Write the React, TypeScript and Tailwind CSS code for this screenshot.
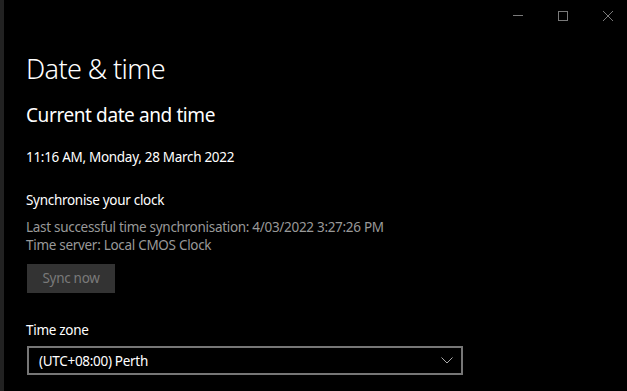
import React from 'react';

function TitleBarControls() {
  return (
    <div className="flex h-[31px] items-center justify-end gap-[35px] pr-[14px]">
      <svg width="10" height="10" viewBox="0 0 10 10" className="text-[#7a7a7a]">
        <path d="M0 4.5H10" stroke="currentColor" strokeWidth="1" />
      </svg>
      <svg width="10" height="10" viewBox="0 0 10 10" className="text-[#7a7a7a]">
        <rect x="0.5" y="0.5" width="9" height="9" fill="none" stroke="currentColor" strokeWidth="1" />
      </svg>
      <svg width="10" height="10" viewBox="0 0 10 10" className="text-[#7a7a7a]">
        <path d="M0 0L10 10M10 0L0 10" stroke="currentColor" strokeWidth="1" />
      </svg>
    </div>
  );
}

export default function App() {
  return (
    <div
      className="flex h-[391px] w-[627px] overflow-hidden bg-black text-[13.5px] tracking-[-0.3px] text-white"
      style={{ fontFamily: '"Noto Sans", "Open Sans", sans-serif' }}
    >
      <div className="w-[4px] shrink-0 bg-[#222222]" />
      <div className="flex flex-1 flex-col">
        <TitleBarControls />

        <div className="flex flex-col pl-[22px]">
          <h1 className="mt-[20px] text-[27px] font-light leading-[36px] tracking-[-0.6px]">Date &amp; time</h1>

          <h2 className="mt-[14px] text-[19px] font-normal leading-[28px] tracking-[-0.4px]">Current date and time</h2>

          <p className="mt-[18px] leading-[20px]">11:16 AM, Monday, 28 March 2022</p>

          <p className="mt-[23px] leading-[20px]">Synchronise your clock</p>

          <div className="mt-[8px] leading-[18px] text-[#999999]">
            <p>Last successful time synchronisation: 4/03/2022 3:27:26 PM</p>
            <p>Time server: Local CMOS Clock</p>
          </div>

          <button
            disabled
            className="mt-[10px] ml-[1px] flex h-[29px] w-[88px] items-center justify-center bg-[#333333] text-[#7a7a7a]"
          >
            Sync now
          </button>

          <p className="mt-[27px] leading-[20px]">Time zone</p>

          <div className="mt-[6px] ml-[1px] flex h-[29px] w-[436px] items-center justify-between border-2 border-[#767676] pl-[10px] pr-[8px]">
            <span className="leading-[20px]">(UTC+08:00) Perth</span>
            <svg width="12" height="7" viewBox="0 0 12 7" className="text-[#aaaaaa]">
              <path d="M0.5 0.5L6 6L11.5 0.5" fill="none" stroke="currentColor" strokeWidth="1" />
            </svg>
          </div>
        </div>
      </div>
    </div>
  );
}
